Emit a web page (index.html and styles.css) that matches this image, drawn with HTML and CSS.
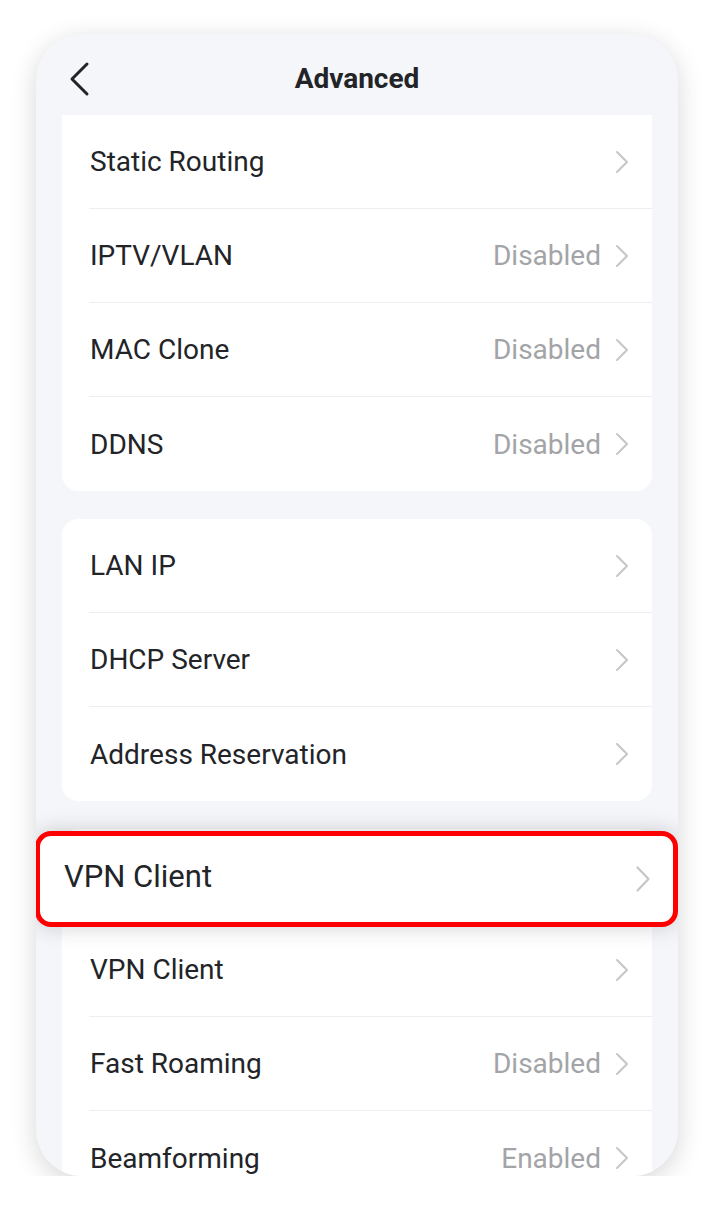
FILE: index.html
```html
<!DOCTYPE html>
<html>
<head>
<meta charset="utf-8">
<link rel="stylesheet" href="styles.css">
</head>
<body>
<div class="phone">
  <div class="header">
    <svg class="back" width="22" height="36" viewBox="0 0 22 36"><path d="M19 3 L4 18 L19 33" fill="none" stroke="#222428" stroke-width="3" stroke-linecap="round" stroke-linejoin="round"/></svg>
    <div class="title">Advanced</div>
  </div>
  <div class="content">
    <div class="card card-top">
      <div class="row"><div class="row-in"><span class="label">Static Routing</span><span class="right"><svg class="chev" width="14" height="24" viewBox="0 0 14 24"><path d="M2 2 L12 12 L2 22" fill="none" stroke="#c6c6c8" stroke-width="2" stroke-linecap="round" stroke-linejoin="round"/></svg></span></div></div>
      <div class="row"><div class="row-in"><span class="label">IPTV/VLAN</span><span class="right"><span class="value">Disabled</span><svg class="chev" width="14" height="24" viewBox="0 0 14 24"><path d="M2 2 L12 12 L2 22" fill="none" stroke="#c6c6c8" stroke-width="2" stroke-linecap="round" stroke-linejoin="round"/></svg></span></div></div>
      <div class="row"><div class="row-in"><span class="label">MAC Clone</span><span class="right"><span class="value">Disabled</span><svg class="chev" width="14" height="24" viewBox="0 0 14 24"><path d="M2 2 L12 12 L2 22" fill="none" stroke="#c6c6c8" stroke-width="2" stroke-linecap="round" stroke-linejoin="round"/></svg></span></div></div>
      <div class="row last"><div class="row-in"><span class="label">DDNS</span><span class="right"><span class="value">Disabled</span><svg class="chev" width="14" height="24" viewBox="0 0 14 24"><path d="M2 2 L12 12 L2 22" fill="none" stroke="#c6c6c8" stroke-width="2" stroke-linecap="round" stroke-linejoin="round"/></svg></span></div></div>
    </div>
    <div class="card">
      <div class="row"><div class="row-in"><span class="label">LAN IP</span><span class="right"><svg class="chev" width="14" height="24" viewBox="0 0 14 24"><path d="M2 2 L12 12 L2 22" fill="none" stroke="#c6c6c8" stroke-width="2" stroke-linecap="round" stroke-linejoin="round"/></svg></span></div></div>
      <div class="row"><div class="row-in"><span class="label">DHCP Server</span><span class="right"><svg class="chev" width="14" height="24" viewBox="0 0 14 24"><path d="M2 2 L12 12 L2 22" fill="none" stroke="#c6c6c8" stroke-width="2" stroke-linecap="round" stroke-linejoin="round"/></svg></span></div></div>
      <div class="row last"><div class="row-in"><span class="label">Address Reservation</span><span class="right"><svg class="chev" width="14" height="24" viewBox="0 0 14 24"><path d="M2 2 L12 12 L2 22" fill="none" stroke="#c6c6c8" stroke-width="2" stroke-linecap="round" stroke-linejoin="round"/></svg></span></div></div>
    </div>
    <div class="card card-bottom">
      <div class="highlight">
        <span class="hl-label">VPN Client</span>
        <svg class="chev" width="16" height="28" viewBox="0 0 16 28"><path d="M2.5 2.5 L13.5 14 L2.5 25.5" fill="none" stroke="#c6c6c8" stroke-width="2.2" stroke-linecap="round" stroke-linejoin="round"/></svg>
      </div>
      <div class="row under"><div class="row-in"></div></div>
      <div class="row"><div class="row-in"><span class="label">VPN Client</span><span class="right"><svg class="chev" width="14" height="24" viewBox="0 0 14 24"><path d="M2 2 L12 12 L2 22" fill="none" stroke="#c6c6c8" stroke-width="2" stroke-linecap="round" stroke-linejoin="round"/></svg></span></div></div>
      <div class="row"><div class="row-in"><span class="label">Fast Roaming</span><span class="right"><span class="value">Disabled</span><svg class="chev" width="14" height="24" viewBox="0 0 14 24"><path d="M2 2 L12 12 L2 22" fill="none" stroke="#c6c6c8" stroke-width="2" stroke-linecap="round" stroke-linejoin="round"/></svg></span></div></div>
      <div class="row last"><div class="row-in"><span class="label">Beamforming</span><span class="right"><span class="value">Enabled</span><svg class="chev" width="14" height="24" viewBox="0 0 14 24"><path d="M2 2 L12 12 L2 22" fill="none" stroke="#c6c6c8" stroke-width="2" stroke-linecap="round" stroke-linejoin="round"/></svg></span></div></div>
    </div>
  </div>
</div>
</body>
</html>
```

FILE: styles.css
```css
* { box-sizing: border-box; }
html, body { margin: 0; padding: 0; background: #ffffff; }
body {
  font-family: Roboto, "Liberation Sans", sans-serif;
  color: #222428;
  padding: 34px 0 0 36px;
}
.phone {
  width: 642px;
  height: 1142px;
  background: #f5f6fa;
  border-radius: 46px;
  box-shadow: 0 6px 26px rgba(0, 0, 0, 0.16);
  overflow: hidden;
}
.header {
  height: 81px;
  position: relative;
  display: flex;
  align-items: center;
  justify-content: center;
}
.back {
  position: absolute;
  left: 32px;
  top: 27px;
}
.title {
  font-size: 28px;
  font-weight: 700;
  margin-top: 8px;
}
.content {
  padding: 0 26px;
  display: flex;
  flex-direction: column;
  gap: 28px;
}
.card {
  background: #ffffff;
  border-radius: 16px;
  padding-left: 27px;
  position: relative;
}
.card-top { border-radius: 0 0 16px 16px; }
.card-bottom { border-radius: 16px 16px 0 0; }
.row { height: 94px; }
.row-in {
  height: 100%;
  display: flex;
  align-items: center;
  justify-content: space-between;
  border-bottom: 1px solid #eeeef0;
  padding-right: 23px;
}
.row.last .row-in { border-bottom: none; }
.label {
  font-size: 28px;
  color: #222428;
  padding-left: 1px;
}
.right {
  display: flex;
  align-items: center;
  gap: 14px;
}
.value {
  font-size: 28px;
  color: #a3a4a7;
}
.chev { display: block; }
.highlight {
  position: absolute;
  left: -27px;
  top: 2px;
  width: 643px;
  height: 96px;
  border: 5px solid #ff0000;
  border-radius: 16px;
  background: #ffffff;
  box-shadow: 0 0 22px rgba(0, 0, 0, 0.18);
  display: flex;
  align-items: center;
  justify-content: space-between;
  padding: 0 22px 0 24px;
  z-index: 2;
}
.hl-label {
  font-size: 31px;
  color: #222428;
  margin-top: -5px;
}
```
